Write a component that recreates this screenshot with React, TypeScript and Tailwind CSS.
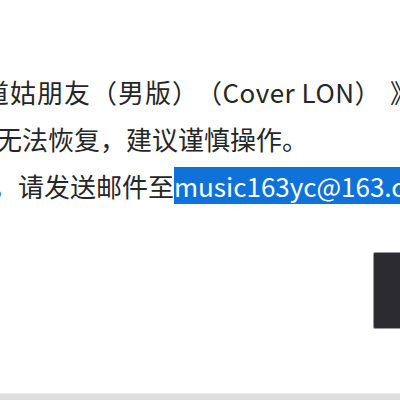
import React from 'react';

const font = { fontFamily: '"Noto Sans CJK SC", "Noto Sans", sans-serif' };

export default function App() {
  return (
    <div className="w-[400px] h-[400px] bg-white overflow-hidden flex flex-col" style={font}>
      {/* message */}
      <div className="pt-[68px] text-[26px] leading-[47px] text-[#262626] whitespace-nowrap">
        <div className="-ml-[17px]">
          <span className="tracking-[1px]">道姑朋友（男版）</span>
          <span className="ml-[10px] tracking-[0.5px]">（Cover LON）</span>
          <span className="ml-[22px]">》</span>
        </div>
        <div className="-ml-[4px]">无法恢复，建议谨慎操作。</div>
        <div className="-ml-[8px]">
          ，请发送邮件至
          <span className="bg-[#0e72d9] text-white">music163yc@163.com</span>
        </div>
      </div>

      {/* footer buttons */}
      <div className="flex justify-end mt-[43px]">
        <div className="w-[80px] h-[77px] -mr-[53px] bg-[#2c2b31] border border-[#9a9a9a] rounded-[2px]" />
      </div>

      <div className="mt-auto h-[7px] bg-[#dedede] border-t border-[#ececec]" />
    </div>
  );
}
